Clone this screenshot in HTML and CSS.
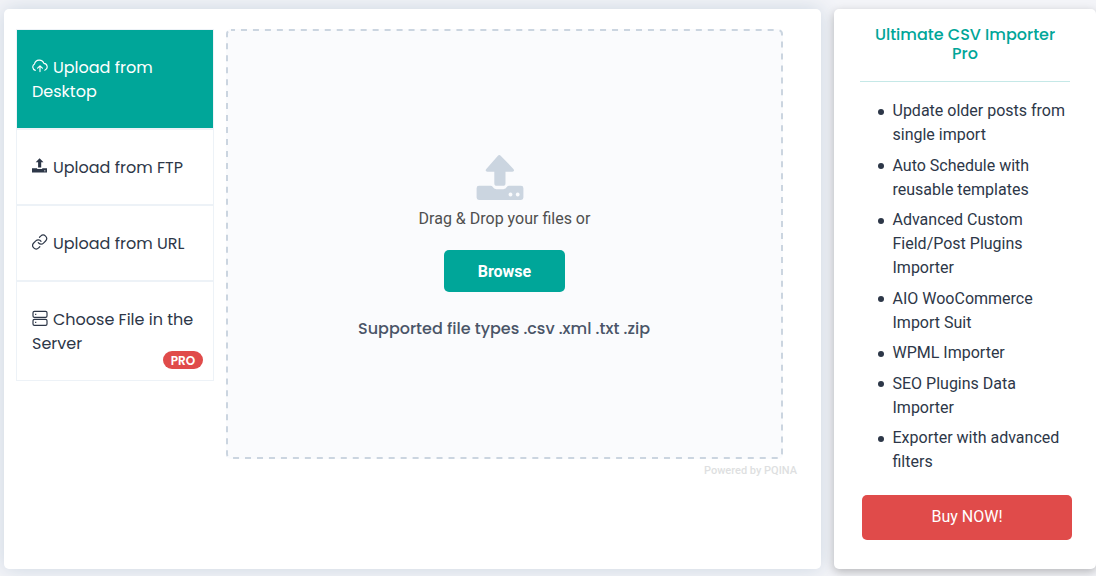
FILE: index.html
```
<!DOCTYPE html>
<html lang="en">
<head>
<meta charset="utf-8">
<title>Ultimate CSV Importer</title>
<link rel="stylesheet" href="styles.css">
</head>
<body>
<div class="page">
  <main class="card importer">
    <nav class="tabs">
      <a class="tab active"><svg class="icon" viewBox="0 0 16 16" fill="none" stroke="currentColor" stroke-width="1.15" stroke-linecap="round" stroke-linejoin="round"><path d="M3.3 12.4A3.6 3.6 0 0 1 2.5 5.9a4.9 4.9 0 0 1 9.4-.5 3.5 3.5 0 0 1 .9 6.8M8 13.6V8.1M5.6 10.2 8 7.8l2.4 2.4"/></svg>Upload from<br>Desktop</a>
      <a class="tab"><svg class="icon" viewBox="0 0 16 16" fill="currentColor"><path d="M7.6.2 11.5 4.300H9.200v5.200H6.100V4.300H3.700zM0 10.200h5.200v.7h5v-.7H15v4.200H0zM12 12.400v.8h1.500v-.8z"/></svg>Upload from FTP</a>
      <a class="tab"><svg class="icon" viewBox="1 .5 23 23" fill="none" stroke="currentColor" stroke-width="1.700" stroke-linecap="round"><path d="M10 13a5 5 0 0 0 7.540.540l3-3a5 5 0 0 0-7.070-7.070l-1.720 1.710M14 11a5 5 0 0 0-7.540-.540l-3 3a5 5 0 0 0 7.070 7.070l1.710-1.710"/></svg>Upload from URL</a>
      <a class="tab"><svg class="icon" viewBox="0 0 16 16" fill="none" stroke="currentColor" stroke-width="1.2"><rect x="1" y="1.400" width="14" height="5.900" rx="1.400"/><rect x="1" y="9.400" width="14" height="5.900" rx="1.400"/><path d="M3.100 4.400h1.200M3.100 12.400h1.200"/></svg>Choose File in the<br>Server<span class="badge">PRO</span></a>
    </nav>
    <section class="upload">
      <div class="dropzone">
        <svg class="outline" viewBox="0 0 557 430"><rect x="1" y="1" width="555" height="428" rx="4"/></svg>
        <svg class="upload-icon" viewBox="0 0 48 46"><path d="M21.700.900q1.600-1.600 3.200 0l12.500 13q1.700 2.400-1.100 2.900h-6.800v11.400q0 2.600-2.600 2.600h-6q-2.600 0-2.600-2.600V16.800h-6.900q-2.800-.500-1.100-2.900z"/><path fill-rule="evenodd" d="M3 30.800h11.500q1.600 0 2.300 1.300 1 2.100 3.600 2.100h6.900q2.600 0 3.500-2.100.700-1.300 2.400-1.300H45q2.400 0 2.400 2.400v9.400q0 2.400-2.400 2.400H3Q.600 45 .600 42.600v-9.400Q.600 30.800 3 30.800zM34.500 37.600a1.900 1.900 0 1 0 .010 0zM41.700 37.600a1.900 1.900 0 1 0 .010 0z"/></svg>
        <p class="drop-text">Drag &amp; Drop your files or</p>
        <button class="browse">Browse</button>
        <p class="types">Supported file types .csv .xml .txt .zip</p>
      </div>
      <p class="powered">Powered by PQINA</p>
    </section>
  </main>
  <aside class="card promo">
    <h2 class="promo-title">Ultimate CSV Importer Pro</h2>
    <ul class="features">
      <li>Update older posts from single import</li>
      <li>Auto Schedule with reusable templates</li>
      <li>Advanced Custom Field/Post Plugins Importer</li>
      <li>AIO WooCommerce Import Suit</li>
      <li>WPML Importer</li>
      <li>SEO Plugins Data Importer</li>
      <li>Exporter with advanced filters</li>
    </ul>
    <button class="buy">Buy NOW!</button>
  </aside>
</div>
</body>
</html>
```
FILE: styles.css
```
* { box-sizing: border-box; }
body {
  margin: 0;
  height: 576px;
  overflow: hidden;
  background: #f3f4f8;
  color: #2d3748;
  font: 16px/24px Roboto, sans-serif;
}
p, h2, ul { margin: 0; padding: 0; }
.page {
  display: flex;
  gap: 13px;
  padding: 9px 0 7px 4px;
  height: 576px;
}
.card { background: #fff; border-radius: 5px; }
.importer {
  display: flex;
  gap: 12px;
  width: 817px;
  padding: 20px 12px;
  box-shadow: 0 0 20px #cbd5e0;
}
.tabs { display: flex; flex-direction: column; width: 198px; }
.tab {
  position: relative;
  padding: 26px 15px 24px;
  border: 1px solid #edf2f7;
  font-family: Poppins, Inter, sans-serif;
  white-space: nowrap;
}
.tab.active {
  background: #00a699;
  background-clip: padding-box;
  color: #fff;
}
.icon { width: 16px; height: 16px; margin-right: 5px; vertical-align: -1px; }
.badge {
  position: absolute;
  right: 10px;
  bottom: 11px;
  width: 40px;
  height: 18px;
  border-radius: 9px;
  background: #e04b4a;
  color: #fff;
  font-size: 12px;
  font-weight: 600;
  line-height: 19px;
  text-align: center;
}
.upload { width: 571px; }
.dropzone {
  position: relative;
  display: flex;
  flex-direction: column;
  align-items: center;
  width: 557px;
  height: 430px;
  padding-top: 126px;
  border-radius: 5px;
  background: #fafbfd;
}
.outline {
  position: absolute;
  inset: 0;
  width: 557px;
  height: 430px;
  fill: none;
  stroke: #cbd5e0;
  stroke-width: 2;
  stroke-dasharray: 6 5.97;
  stroke-dashoffset: 2;
}
.upload-icon { width: 48px; height: 46px; margin-right: 9px; fill: #cbd5e0; }
.drop-text { margin-top: 6px; color: #4f4f4f; }
.browse {
  width: 121px;
  height: 42px;
  margin-top: 19px;
  padding: 2px 0 0;
  border: 0;
  border-radius: 5px;
  background: #00a699;
  color: #fff;
  font: 700 16px/24px Roboto, sans-serif;
}
.types {
  margin: 25px 1px 0 0;
  color: #4a5568;
  font-family: Poppins, Inter, sans-serif;
  font-weight: 500;
}
.powered {
  color: #dedfe1;
  font-size: 11px;
  font-weight: 500;
  text-align: right;
}
.promo {
  width: 262px;
  padding: 16px 23px 29px 26px;
  box-shadow: 0 3px 10px rgba(0, 0, 0, .25);
}
.promo-title {
  width: 210px;
  height: 57px;
  border-bottom: 1px solid #c5e8e7;
  color: #00a699;
  font: 500 16px/19px Poppins, Inter, sans-serif;
  text-align: center;
}
.features { margin-top: 17px; padding-left: 32.5px; list-style: none; }
.features li { position: relative; margin-bottom: 6.5px; }
.features li::before {
  content: "";
  position: absolute;
  left: -14.3px;
  top: 9.5px;
  width: 6px;
  height: 6px;
  border-radius: 50%;
  background: #2d3748;
}
.buy {
  display: block;
  width: 210px;
  height: 45px;
  margin: 21px 0 0 2px;
  padding: 0 0 2px;
  border: 0;
  border-radius: 5px;
  background: #e04b4a;
  color: #fff;
  font: 16px/24px Roboto, sans-serif;
}
```
